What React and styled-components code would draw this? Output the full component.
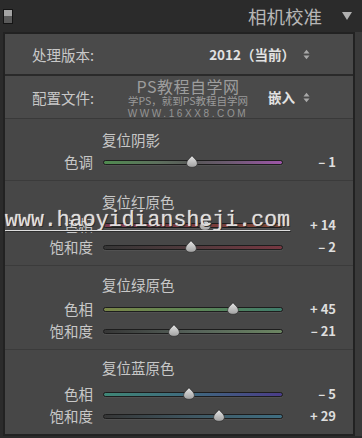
import React from 'react';
import styled, { createGlobalStyle } from 'styled-components';

const Global = createGlobalStyle`
  html, body { margin: 0; padding: 0; background: #2b2b2b; }
  body {
    width: 362px; height: 438px; overflow: hidden;
    font-family: "Noto Sans CJK SC", "Noto Sans", sans-serif;
  }
  * { box-sizing: border-box; }
`;

const Page = styled.div`
  position: relative;
  width: 362px;
  height: 438px;
  display: flex;
  flex-direction: column;
  background: #2b2b2b;
`;

const Header = styled.div`
  height: 32px;
  display: flex;
  align-items: center;
  padding: 0 10px 0 3px;
`;

const PanelIcon = styled.div`
  width: 10px;
  height: 15px;
  border: 1px solid #141414;
  background: linear-gradient(#a4a4a4 0 45%, #5a5a5a 45% 100%);
  margin-top: 1px;
`;

const Title = styled.div`
  margin-left: auto;
  color: #b6b6b6;
  font-size: 18.5px;
  line-height: 1;
  margin-top: 1px;
`;

const Caret = styled.div`
  margin-left: 20px;
  width: 0;
  height: 0;
  border-left: 5px solid transparent;
  border-right: 5px solid transparent;
  border-top: 8px solid #b0b0b0;
`;

const Body = styled.div`
  flex: 1;
  display: flex;
  padding: 0 0 2px 3px;
`;

const Panel = styled.div`
  width: 352px;
  border: 2px solid #222;
  background: #474747;
  display: flex;
  flex-direction: column;
`;

const Strip = styled.div`
  flex: 1;
  background: #3a3a3a;
`;

const SelectRow = styled.div`
  position: relative;
  height: ${p => p.$h}px;
  flex: none;
  display: flex;
  align-items: center;
  padding: 0 43px 0 27px;
  background: #4a4a4a;
  border-bottom: ${p => (p.$heavy ? '2px solid #2a2a2a' : '1px solid #393939')};
`;

const RowLabel = styled.span`
  font-size: 14.5px;
  color: #c8c8c8;
`;

const RowValue = styled.span`
  margin-left: auto;
  font-size: 13.5px;
  font-weight: 700;
  color: #e2e2e2;
  margin-right: 8px;
`;

const Watermark = styled.div`
  position: absolute;
  top: 2px;
  left: 183px;
  transform: translateX(-50%);
  display: flex;
  flex-direction: column;
  align-items: center;
  pointer-events: none;
`;

const WmTitle = styled.div`
  font-size: 16px;
  line-height: 17px;
  color: #9d9d9d;
  letter-spacing: 0.5px;
`;

const WmSub = styled.div`
  font-size: 10.5px;
  line-height: 12px;
  color: #9a9a9a;
`;

const WmUrl = styled.div`
  font-family: "Liberation Sans", sans-serif;
  font-size: 10px;
  line-height: 11px;
  color: #959595;
  letter-spacing: 2.6px;
  margin-top: 1px;
`;

const SiteMark = styled.div`
  position: absolute;
  left: 5px;
  top: 210px;
  font-family: "Liberation Mono", monospace;
  font-size: 21.6px;
  line-height: 21px;
  color: #dedede;
  text-decoration: underline;
  text-decoration-thickness: 1px;
  text-underline-offset: 4px;
  text-shadow: 1px 1px 0 #2e2e2e, 0 0 1px #ffffff;
  white-space: nowrap;
  pointer-events: none;
`;

const Section = styled.div`
  display: flex;
  flex-direction: column;
  padding: ${p => p.$top}px 0 10px;
  border-bottom: ${p => (p.$last ? 'none' : '1px solid #3b3b3b')};
  flex: ${p => (p.$last ? 1 : 'none')};
`;

const SectionTitle = styled.div`
  margin-left: 97px;
  height: 16px;
  line-height: 16px;
  font-size: 14.5px;
  color: #c8c8c8;
  margin-bottom: ${p => p.$gap}px;
`;

const Rows = styled.div`
  display: flex;
  flex-direction: column;
  gap: 6px;
`;

const SliderRow = styled.div`
  display: grid;
  grid-template-columns: 88px 180px 1fr;
  column-gap: 10px;
  height: 16px;
  align-items: center;
`;

const SliderLabel = styled.div`
  text-align: right;
  font-size: 14.5px;
  line-height: 16px;
  color: #c8c8c8;
`;

const Track = styled.div`
  position: relative;
  height: 5px;
  border: 1px solid #1d1d1d;
  border-radius: 3px;
  background: ${p => p.$grad};
  box-shadow: 0 1px 0 rgba(255, 255, 255, 0.06);
`;

const Thumb = styled.svg`
  position: absolute;
  top: -6px;
  width: 13px;
  height: 13px;
  transform: translateX(-50%);
`;

const SliderValue = styled.div`
  text-align: right;
  padding-right: 17px;
  font-size: 13px;
  font-weight: 700;
  color: #dedede;
  line-height: 16px;
`;

const UpDown = () => (
  <svg width="7" height="11" viewBox="0 0 7 11">
    <path d="M0.5 4.5 L3.5 0.8 L6.5 4.5 Z" fill="#a9a9a9" />
    <path d="M0.5 6.5 L3.5 10.2 L6.5 6.5 Z" fill="#a9a9a9" />
  </svg>
);

const sections = [
  {
    title: '复位阴影', top: 13, gap: 6,
    rows: [
      { label: '色调', value: -1, grad: 'linear-gradient(90deg,#4f8a4f 0%,#5d705d 30%,#575757 50%,#6c5a70 70%,#9d55a8 100%)' },
    ],
  },
  {
    title: '复位红原色', top: 13, gap: 7,
    rows: [
      { label: '色相', value: 14, grad: 'linear-gradient(90deg,#7a3a4e 0%,#7a3a3e 50%,#7a4632 100%)' },
      { label: '饱和度', value: -2, grad: 'linear-gradient(90deg,#363636 0%,#523a3d 50%,#773741 100%)' },
    ],
  },
  {
    title: '复位绿原色', top: 11, gap: 8,
    rows: [
      { label: '色相', value: 45, grad: 'linear-gradient(90deg,#7a8648 0%,#5e8655 50%,#3f7c6b 100%)' },
      { label: '饱和度', value: -21, grad: 'linear-gradient(90deg,#363636 0%,#56625a 50%,#6c8662 100%)' },
    ],
  },
  {
    title: '复位蓝原色', top: 10, gap: 10,
    rows: [
      { label: '色相', value: -5, grad: 'linear-gradient(90deg,#3f8676 0%,#3f687e 50%,#4a3c88 100%)' },
      { label: '饱和度', value: 29, grad: 'linear-gradient(90deg,#363636 0%,#3f5762 50%,#3f6e82 100%)' },
    ],
  },
];

const fmt = v => `${v < 0 ? '–' : '+'} ${Math.abs(v)}`;

const Slider = ({ label, value, grad }) => (
  <SliderRow>
    <SliderLabel>{label}</SliderLabel>
    <Track $grad={grad}>
      <Thumb viewBox="0 0 12 12" style={{ left: `${((value + 100) / 200) * 100}%` }}>
        <defs>
          <linearGradient id="tg" x1="0" y1="0" x2="0" y2="1">
            <stop offset="0" stopColor="#e6e6e6" />
            <stop offset="1" stopColor="#a0a0a0" />
          </linearGradient>
        </defs>
        <path
          d="M6 0.6 C7.4 2.6 11 4.8 11 7.6 C11 10.1 8.8 11.4 6 11.4 C3.2 11.4 1 10.1 1 7.6 C1 4.8 4.6 2.6 6 0.6 Z"
          fill="url(#tg)"
          stroke="#2a2a2a"
          strokeWidth="0.6"
        />
      </Thumb>
    </Track>
    <SliderValue>{fmt(value)}</SliderValue>
  </SliderRow>
);

export default function App() {
  return (
    <Page>
      <Global />
      <Header>
        <PanelIcon />
        <Title>相机校准</Title>
        <Caret />
      </Header>
      <Body>
        <Panel>
          <SelectRow $h={42} $heavy>
            <RowLabel>处理版本:</RowLabel>
            <RowValue>2012（当前）</RowValue>
            <UpDown />
          </SelectRow>
          <SelectRow $h={43}>
            <RowLabel>配置文件:</RowLabel>
            <RowValue>嵌入</RowValue>
            <UpDown />
            <Watermark>
              <WmTitle>PS教程自学网</WmTitle>
              <WmSub>学PS，就到PS教程自学网</WmSub>
              <WmUrl>WWW.16XX8.COM</WmUrl>
            </Watermark>
          </SelectRow>
          {sections.map((s, i) => (
            <Section key={s.title} $top={s.top} $last={i === sections.length - 1}>
              <SectionTitle $gap={s.gap}>{s.title}</SectionTitle>
              <Rows>
                {s.rows.map(r => (
                  <Slider key={r.label} {...r} />
                ))}
              </Rows>
            </Section>
          ))}
        </Panel>
        <Strip />
      </Body>
      <SiteMark>www.haoyidiansheji.com</SiteMark>
    </Page>
  );
}
